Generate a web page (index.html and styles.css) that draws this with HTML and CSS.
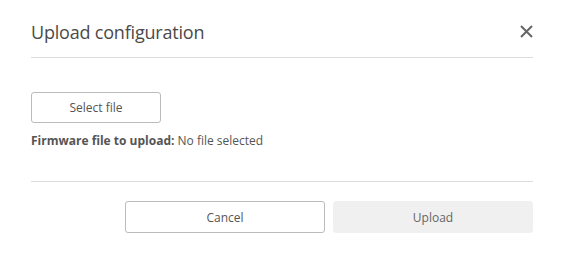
FILE: index.html
```html
<!DOCTYPE html>
<html>
<head>
<meta charset="utf-8">
<link rel="stylesheet" href="styles.css">
</head>
<body>
<div class="dialog">
  <div class="header">
    <h1 class="title">Upload configuration</h1>
    <button class="close" aria-label="Close">
      <svg width="13" height="13" viewBox="0 0 13 13"><path d="M1 1L12 12M12 1L1 12" stroke="#666" stroke-width="2" fill="none"/></svg>
    </button>
  </div>
  <div class="content">
    <button class="btn select">Select file</button>
    <p class="info"><b>Firmware file to upload:</b> No file selected</p>
  </div>
  <div class="footer">
    <button class="btn cancel">Cancel</button>
    <button class="btn upload">Upload</button>
  </div>
</div>
</body>
</html>
```
FILE: styles.css
```css
* { box-sizing: border-box; }
body {
  margin: 0;
  background: #fff;
  font-family: "Open Sans", sans-serif;
  color: #555;
}
.dialog {
  width: 564px;
  padding: 0 31px;
}
.header {
  height: 58px;
  padding-top: 6px;
  display: flex;
  align-items: center;
  justify-content: space-between;
  border-bottom: 1px solid #ddd;
}
.title {
  margin: 0;
  font-weight: 400;
  font-size: 18px;
  color: #4a4a4a;
  letter-spacing: -0.2px;
}
.close {
  border: 0;
  background: none;
  padding: 0;
  width: 13px;
  height: 13px;
  display: flex;
}
.content {
  padding: 34px 0 0;
  height: 124px;
  border-bottom: 1px solid #ddd;
}
.btn {
  font-family: "Open Sans", sans-serif;
  font-size: 12px;
  color: #555;
  background: #fff;
  border: 1px solid #bbb;
  border-radius: 3px;
}
.select {
  width: 130px;
  height: 31px;
  display: block;
}
.info {
  margin: 9px 0 0;
  font-size: 12px;
  color: #555;
}
.info b { font-weight: 700; color: #555; }
.footer {
  display: flex;
  justify-content: flex-end;
  gap: 8px;
  padding-top: 19px;
}
.cancel, .upload {
  width: 200px;
  height: 32px;
}
.upload {
  background: #f0f0f0;
  border-color: #f0f0f0;
  color: #666;
}
```
